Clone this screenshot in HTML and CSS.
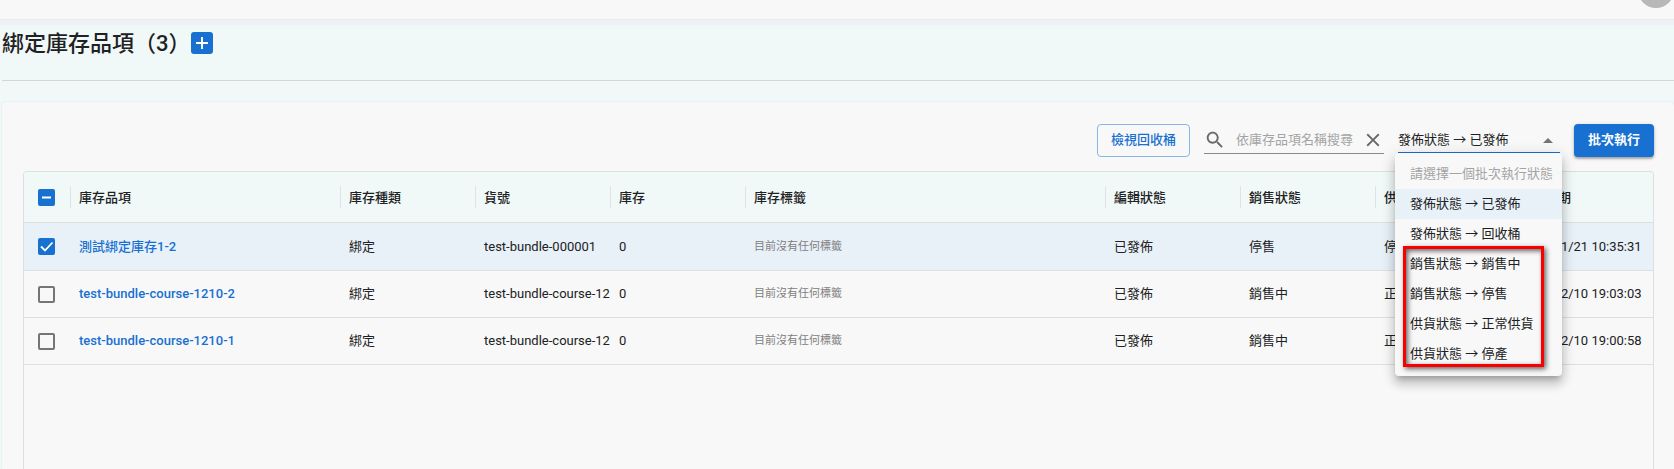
FILE: index.html
```html
<!DOCTYPE html>
<html lang="zh-Hant">
<head>
<meta charset="utf-8">
<meta name="viewport" content="width=device-width, initial-scale=1">
<title>綁定庫存品項</title>
<link rel="stylesheet" href="styles.css">
</head>
<body>
<header class="topbar"><span class="avatar"></span></header>
<main class="page">
  <div class="heading">
    <h1 class="title">綁定庫存品項（3）</h1>
    <button class="add" type="button" aria-label="新增">
      <svg viewBox="0 0 22 22" width="22" height="22"><path d="M11 5v12M5 11h12" stroke="currentColor" stroke-width="2" fill="none"/></svg>
    </button>
  </div>
  <section class="panel">
    <div class="toolbar">
      <button class="btn btn-outline" type="button">檢視回收桶</button>
      <div class="search">
        <svg class="icon" viewBox="0 0 24 24" width="22" height="22"><path fill="currentColor" d="M15.5 14h-.79l-.28-.27C15.41 12.59 16 11.11 16 9.5 16 5.91 13.09 3 9.5 3S3 5.91 3 9.5 5.91 16 9.5 16c1.61 0 3.09-.59 4.23-1.57l.27.28v.79l5 4.99L20.49 19l-4.99-5zm-6 0C7.01 14 5 11.99 5 9.5S7.01 5 9.5 5 14 7.01 14 9.5 11.99 14 9.5 14z"/></svg>
        <input class="search-input" type="text" aria-label="搜尋" placeholder="依庫存品項名稱搜尋">
        <button class="clear" type="button" aria-label="清除">
          <svg viewBox="0 0 24 24" width="22" height="22"><path fill="currentColor" d="M19 6.41 17.59 5 12 10.59 6.41 5 5 6.41 10.59 12 5 17.59 6.41 19 12 13.41 17.59 19 19 17.59 13.41 12z"/></svg>
        </button>
      </div>
      <div class="picker">
        <select class="picker-select" aria-label="批次執行狀態">
          <option>發佈狀態 → 已發佈</option>
        </select>
        <span class="caret"></span>
        <div class="menu">
          <button class="item" type="button" disabled>請選擇一個批次執行狀態</button>
          <button class="item item-active" type="button">發佈狀態 → 已發佈</button>
          <button class="item" type="button">發佈狀態 → 回收桶</button>
          <button class="item" type="button">銷售狀態 → 銷售中</button>
          <button class="item" type="button">銷售狀態 → 停售</button>
          <button class="item" type="button">供貨狀態 → 正常供貨</button>
          <button class="item" type="button">供貨狀態 → 停產</button>
          <span class="highlight"></span>
        </div>
      </div>
      <button class="btn btn-solid" type="button">批次執行</button>
    </div>
    <div class="grid">
      <table class="table">
        <colgroup>
          <col class="c-check"><col class="c-name"><col class="c-std"><col class="c-std"><col class="c-std"><col class="c-tags"><col class="c-std"><col class="c-std"><col class="c-std"><col>
        </colgroup>
        <thead>
          <tr>
            <th class="pick"><input class="check check-some" type="checkbox" aria-label="全選"></th>
            <th><span class="label">庫存品項</span></th>
            <th><span class="label">庫存種類</span></th>
            <th><span class="label">貨號</span></th>
            <th><span class="label">庫存</span></th>
            <th><span class="label">庫存標籤</span></th>
            <th><span class="label">編輯狀態</span></th>
            <th><span class="label">銷售狀態</span></th>
            <th><span class="label">供貨狀態</span></th>
            <th><span class="label">建立日期</span></th>
          </tr>
        </thead>
        <tbody>
          <tr class="selected">
            <td class="pick"><input class="check" type="checkbox" aria-label="選取 測試綁定庫存1-2" checked></td>
            <td><a class="link" href="#">測試綁定庫存1-2</a></td>
            <td>綁定</td><td>test-bundle-000001</td><td>0</td>
            <td class="tags">目前沒有任何標籤</td>
            <td>已發佈</td><td>停售</td><td>停產</td><td>2022/11/21 10:35:31</td>
          </tr>
          <tr>
            <td class="pick"><input class="check" type="checkbox" aria-label="選取 test-bundle-course-1210-2"></td>
            <td><a class="link" href="#">test-bundle-course-1210-2</a></td>
            <td>綁定</td><td>test-bundle-course-121</td><td>0</td>
            <td class="tags">目前沒有任何標籤</td>
            <td>已發佈</td><td>銷售中</td><td>正常</td><td>2021/12/10 19:03:03</td>
          </tr>
          <tr>
            <td class="pick"><input class="check" type="checkbox" aria-label="選取 test-bundle-course-1210-1"></td>
            <td><a class="link" href="#">test-bundle-course-1210-1</a></td>
            <td>綁定</td><td>test-bundle-course-121</td><td>0</td>
            <td class="tags">目前沒有任何標籤</td>
            <td>已發佈</td><td>銷售中</td><td>正常</td><td>2021/12/10 19:00:58</td>
          </tr>
        </tbody>
      </table>
    </div>
  </section>
</main>
</body>
</html>
```
FILE: styles.css
```css
* { box-sizing: border-box; }

body {
  margin: 0;
  min-height: 100vh;
  display: flex;
  flex-direction: column;
  background: #f0f8f8;
  color: #202122;
  font: 400 13px/20px Roboto, "Noto Sans CJK TC", sans-serif;
}

button, input, select { font: inherit; color: inherit; }
button { border: 0; padding: 0; background: none; cursor: pointer; }
svg { display: block; }

.topbar {
  height: 20px;
  flex: none;
  display: flex;
  justify-content: flex-end;
  align-items: flex-end;
  padding-bottom: 11px;
  overflow: hidden;
  background: #f8f8f8;
  border-bottom: 1px solid #e8ecf0;
}
.avatar { flex: none; width: 36px; height: 36px; border-radius: 50%; background: #b8b8b8; }

.page {
  flex: 1;
  display: flex;
  flex-direction: column;
  padding-left: 2px;
  border-top: 5px solid #eff0f6;
}

.heading {
  display: flex;
  align-items: flex-start;
  height: 56px;
  padding-top: 7px;
  border-bottom: 1px solid #d4d6d8;
}
.title { margin: 0; font-size: 22px; line-height: 24px; font-weight: 500; }
.add { width: 22px; height: 22px; border-radius: 3px; background: #1870d0; color: #fff; }

.panel {
  flex: 1;
  display: flex;
  flex-direction: column;
  gap: 14px;
  margin-top: 21px;
  padding: 22px 20px 0 21px;
  border-radius: 4px 4px 0 0;
  background: #f8f8f8;
  box-shadow: 0 0 2px #dcdcec;
}

.toolbar { display: flex; justify-content: flex-end; gap: 14px; height: 33px; }
.btn { height: 33px; border-radius: 4px; padding: 0 14px 2px; line-height: 28px; font-weight: 500; }
.btn-outline { padding: 0 13px 2px; border: 1px solid #88b6e8; color: #1870d0; }
.btn-solid {
  background: #1870d0;
  color: #fff;
  font-weight: 700;
  box-shadow: 0 2px 2px rgba(0, 0, 0, .24), 0 1px 4px rgba(0, 0, 0, .16);
}

.search {
  display: flex;
  align-items: center;
  width: 180px;
  height: 30px;
  padding-top: 2px;
  border-bottom: 1px solid #8a8a8a;
  color: #686868;
}
.search-input { flex: 1; min-width: 0; border: 0; padding: 0 0 0 10px; background: none; outline: 0; }
.search-input::placeholder { color: #a4a4a4; opacity: 1; }
.icon, .clear { flex: none; }

.picker { position: relative; width: 162px; height: 29px; border-bottom: 1px solid #1870d0; }
.picker-select {
  width: 100%;
  height: 28px;
  padding: 3px 20px 0 0;
  border: 0;
  outline: 0;
  appearance: none;
  background: none;
}
.caret {
  position: absolute;
  right: 7px;
  top: 14px;
  border: 5px solid transparent;
  border-top: 0;
  border-bottom-color: #757575;
}
.menu {
  position: absolute;
  z-index: 1;
  top: 29px;
  left: -3px;
  right: -2px;
  display: flex;
  flex-direction: column;
  padding: 6px 0 7px;
  border-radius: 4px;
  background: #f8f8f8;
  box-shadow: 0 5px 5px -3px rgba(0, 0, 0, .2), 0 8px 10px 1px rgba(0, 0, 0, .14), 0 3px 14px 2px rgba(0, 0, 0, .12);
}
.item { height: 30px; padding: 0 0 0 15px; text-align: left; white-space: nowrap; }
.item:disabled { color: #a4a4a4; }
.item-active { background: #e8f0f8; }
.highlight {
  position: absolute;
  top: 93px;
  left: 8px;
  right: 18px;
  bottom: 9px;
  border: 3px solid #f80000;
  box-shadow: 2px 2px 5px rgba(0, 0, 0, .6), inset 2px 2px 5px rgba(0, 0, 0, .6);
  pointer-events: none;
}

.grid { flex: 1; border: 1px solid #dedfe0; border-bottom: 0; border-radius: 4px 4px 0 0; overflow: hidden; }
.table { width: 100%; table-layout: fixed; border-collapse: separate; border-spacing: 0; }
.c-check { width: 46px; }
.c-name { width: 270px; }
.c-std { width: 135px; }
.c-tags { width: 360px; }

th, td {
  padding: 0 0 0 9px;
  border-bottom: 1px solid #dedfe0;
  text-align: left;
  white-space: nowrap;
  overflow: hidden;
}
th { height: 51px; padding-left: 0; background: #f0f8f8; font-weight: 500; }
td { height: 47px; }
.label { display: block; height: 22px; padding-left: 8px; border-left: 1px solid #e2e2e6; line-height: 24px; }
.selected td { height: 48px; background: #e8f0f8; }
.pick { padding-left: 14px; }
.link { color: #1870d0; font-weight: 500; text-decoration: none; }
.tags { color: #808080; font-size: 11px; }

.check {
  appearance: none;
  display: block;
  width: 17px;
  height: 17px;
  margin: 0;
  border: 2px solid #757575;
  border-radius: 2px;
}
.check:checked, .check-some { border-color: #1870d0; background: #1870d0 center / 17px 17px no-repeat; }
.check:checked { background-image: url("data:image/svg+xml,%3Csvg xmlns='http://www.w3.org/2000/svg' viewBox='0 0 17 17'%3E%3Cpath d='M3 8.5l4 4 7.500-8' fill='none' stroke='white' stroke-width='1.800'/%3E%3C/svg%3E"); }
.check-some { background-image: url("data:image/svg+xml,%3Csvg xmlns='http://www.w3.org/2000/svg' viewBox='0 0 17 17'%3E%3Cpath d='M4 8.500h9' stroke='white' stroke-width='2'/%3E%3C/svg%3E"); }
```
